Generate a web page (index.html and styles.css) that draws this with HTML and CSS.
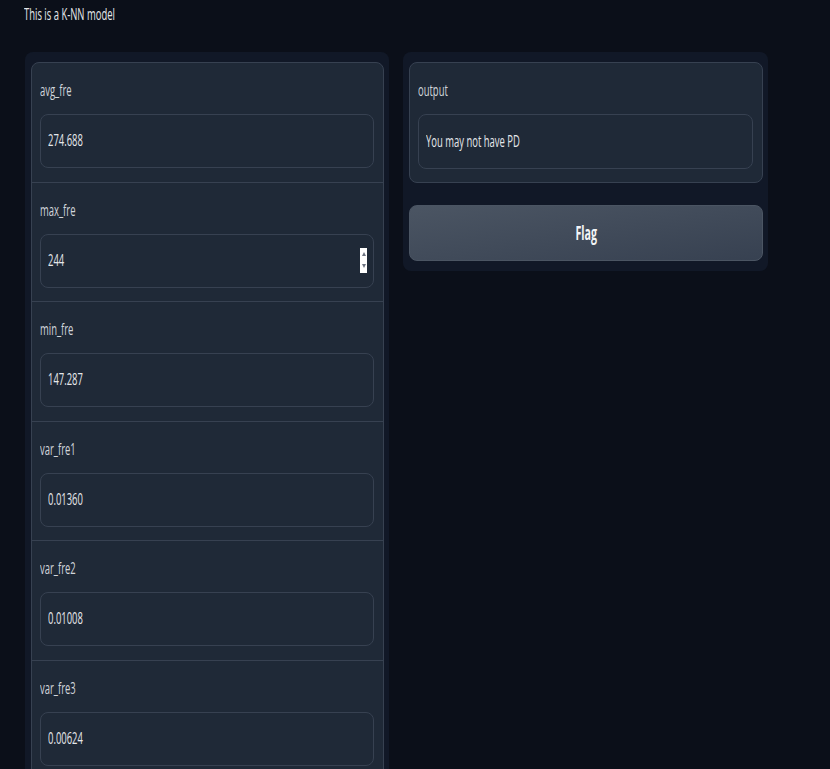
FILE: index.html
```html
<!DOCTYPE html>
<html>
<head>
<meta charset="utf-8">
<link rel="stylesheet" href="styles.css">
</head>
<body>
<div class="page">
  <div class="title"><span class="t">This is a K-NN model</span></div>
  <div class="row">
    <div class="panel left">
      <div class="stack">
        <div class="block">
          <div class="label"><span class="t">avg_fre</span></div>
          <div class="field"><span class="t">274.688</span></div>
        </div>
        <div class="block">
          <div class="label"><span class="t">max_fre</span></div>
          <div class="field"><span class="t">244</span><span class="spin"><i class="up"></i><i class="down"></i></span></div>
        </div>
        <div class="block">
          <div class="label"><span class="t">min_fre</span></div>
          <div class="field"><span class="t">147.287</span></div>
        </div>
        <div class="block">
          <div class="label"><span class="t">var_fre1</span></div>
          <div class="field"><span class="t">0.01360</span></div>
        </div>
        <div class="block">
          <div class="label"><span class="t">var_fre2</span></div>
          <div class="field"><span class="t">0.01008</span></div>
        </div>
        <div class="block">
          <div class="label"><span class="t">var_fre3</span></div>
          <div class="field"><span class="t">0.00624</span></div>
        </div>
      </div>
    </div>
    <div class="panel right">
      <div class="stack out">
        <div class="block">
          <div class="label"><span class="t">output</span></div>
          <div class="field tall"><span class="t">You may not have PD</span></div>
        </div>
      </div>
      <button class="flag"><span class="t c">Flag</span></button>
    </div>
  </div>
</div>
</body>
</html>
```

FILE: styles.css
```css
html, body {
  margin: 0;
  padding: 0;
  background: #0b0f19;
  height: 769px;
  overflow: hidden;
}
body {
  font-family: "Open Sans", sans-serif;
  color: #e5e7eb;
  font-size: 15.5px;
}
.t {
  display: inline-block;
  transform: scaleX(0.61);
  transform-origin: left center;
  white-space: nowrap;
}
.t.c {
  transform: scaleX(0.56);
  transform-origin: center center;
}
.page {
  padding: 4px 62px 0 24px;
}
.title {
  height: 20px;
  line-height: 20px;
  color: #e5e7eb;
}
.row {
  display: flex;
  gap: 14px;
  margin-top: 28px;
  margin-left: 1px;
  align-items: flex-start;
}
.panel {
  background: #111827;
  border-radius: 8px;
  padding: 10px 5px 10px 6px;
}
.left {
  width: 353px;
  padding-bottom: 40px;
}
.right {
  width: 354px;
  display: flex;
  flex-direction: column;
  gap: 22px;
}
.stack {
  border: 1px solid #374151;
  border-radius: 8px;
  background: #1f2937;
  overflow: hidden;
}
.block {
  padding: 17px 9px 13.5px 8px;
  border-top: 1px solid #374151;
}
.block:first-child {
  border-top: none;
}
.label {
  line-height: 20px;
  height: 20px;
  margin-bottom: 14px;
  color: #d1d5db;
}
.field {
  position: relative;
  height: 52px;
  line-height: 51px;
  border: 1px solid #374151;
  border-radius: 8px;
  padding: 0 7px;
  color: #e5e7eb;
  background: #1f2937;
}
.field.tall {
  height: 53px;
  line-height: 53px;
}
.out .block {
  padding-bottom: 13px;
}
.spin {
  position: absolute;
  right: 6px;
  top: 13px;
  width: 7px;
  height: 25px;
  background: #fff;
  display: flex;
  flex-direction: column;
  justify-content: space-around;
  align-items: center;
}
.spin i {
  width: 0;
  height: 0;
  border-left: 2px solid transparent;
  border-right: 2px solid transparent;
}
.spin .up { border-bottom: 4px solid #6b7280; }
.spin .down { border-top: 4px solid #6b7280; }
.flag {
  height: 56px;
  border: 1px solid #4b5563;
  border-radius: 8px;
  background: linear-gradient(to bottom right, #4b5563, #374151);
  color: #f3f4f6;
  font-family: inherit;
  font-weight: bold;
  font-size: 19px;
  line-height: 24px;
  cursor: pointer;
}
```
